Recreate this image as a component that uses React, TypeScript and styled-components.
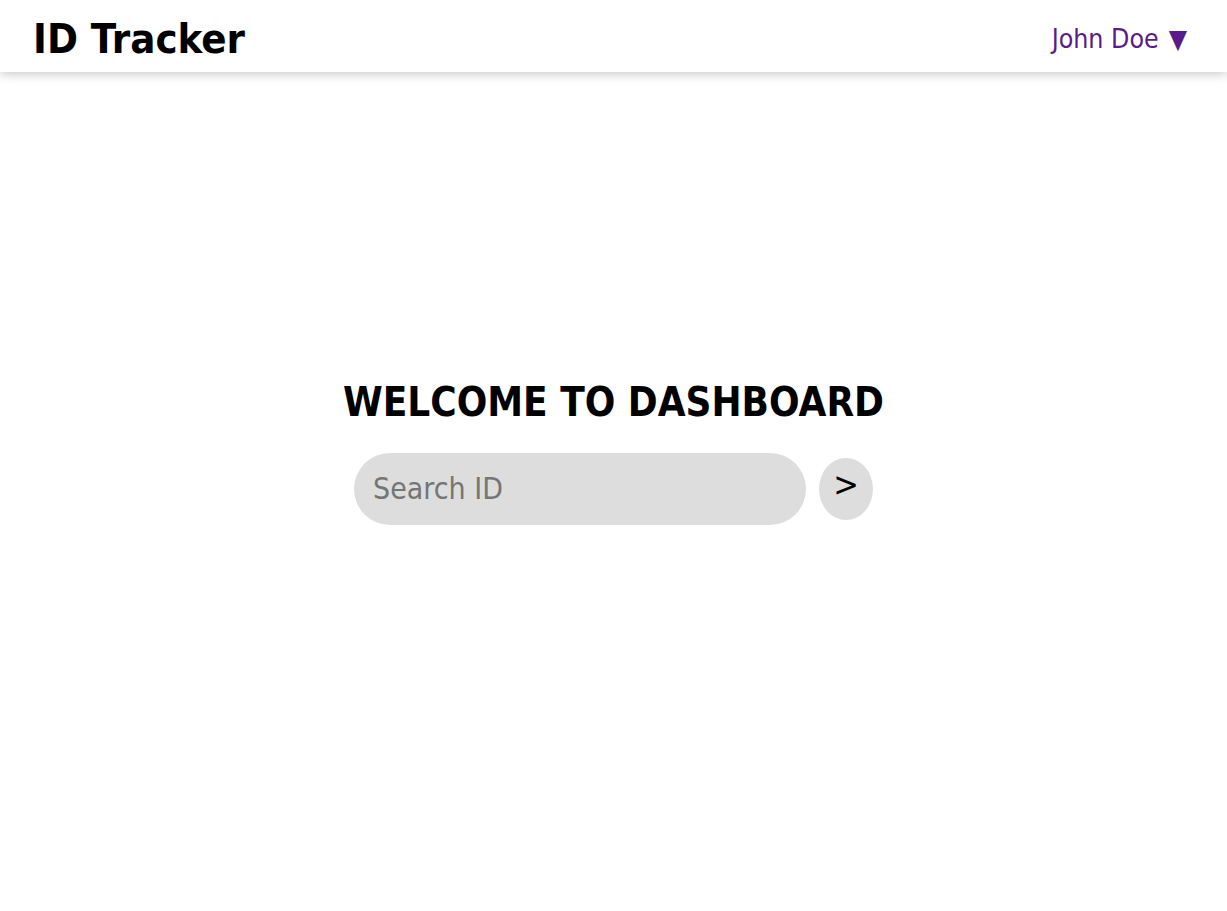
import styled, { createGlobalStyle } from "styled-components";

const GlobalStyle = createGlobalStyle`
  * {
    box-sizing: border-box;
  }

  body {
    margin: 0;
    background-color: #fff;
    font-family: "DejaVu Sans Condensed", "DejaVu Sans", sans-serif;
  }
`;

const Page = styled.div`
  min-height: 100vh;
  display: flex;
  flex-direction: column;
`;

const Navbar = styled.header`
  height: 72px;
  padding: 4px 40px 0 33px;
  display: flex;
  align-items: center;
  justify-content: space-between;
  background-color: #fff;
  box-shadow: 0 2px 10px rgba(0, 0, 0, 0.22);
  position: relative;
  z-index: 1;

  h1 {
    margin: 0;
    font-size: 41.5px;
    font-weight: 700;
    color: #000;
  }
`;

const UserMenu = styled.button`
  border: none;
  background: none;
  padding: 0;
  font-family: inherit;
  font-size: 26.5px;
  color: #5a1a8a;
  cursor: pointer;
  display: flex;
  align-items: center;
  gap: 10px;
`;

const Main = styled.main`
  flex: 1;
  padding-bottom: 80px;
  display: flex;
  flex-direction: column;
  align-items: center;
  justify-content: center;

  h2 {
    margin: 0 0 28px;
    font-size: 40px;
    font-weight: 700;
    color: #000;
  }
`;

const SearchForm = styled.form`
  display: flex;
  align-items: center;
  gap: 13px;
`;

const SearchInput = styled.input`
  width: 452px;
  height: 72px;
  border: none;
  border-radius: 36px;
  padding: 0 19px;
  background-color: #ddd;
  font-family: inherit;
  font-size: 30px;
  color: #000;
  outline: none;

  &::placeholder {
    color: #757575;
  }
`;

const GoButton = styled.button`
  width: 54px;
  height: 62px;
  border: none;
  border-radius: 50%;
  background-color: #ddd;
  font-family: inherit;
  font-size: 34px;
  color: #000;
  padding: 0 0 10px;
  cursor: pointer;
`;

export default function App() {
  return (
    <Page>
      <GlobalStyle />
      <Navbar>
        <h1>ID Tracker</h1>
        <UserMenu>
          John Doe <span>▼</span>
        </UserMenu>
      </Navbar>
      <Main>
        <h2>WELCOME TO DASHBOARD</h2>
        <SearchForm onSubmit={(e) => e.preventDefault()}>
          <SearchInput type="text" placeholder="Search ID" />
          <GoButton type="submit">&gt;</GoButton>
        </SearchForm>
      </Main>
    </Page>
  );
}
